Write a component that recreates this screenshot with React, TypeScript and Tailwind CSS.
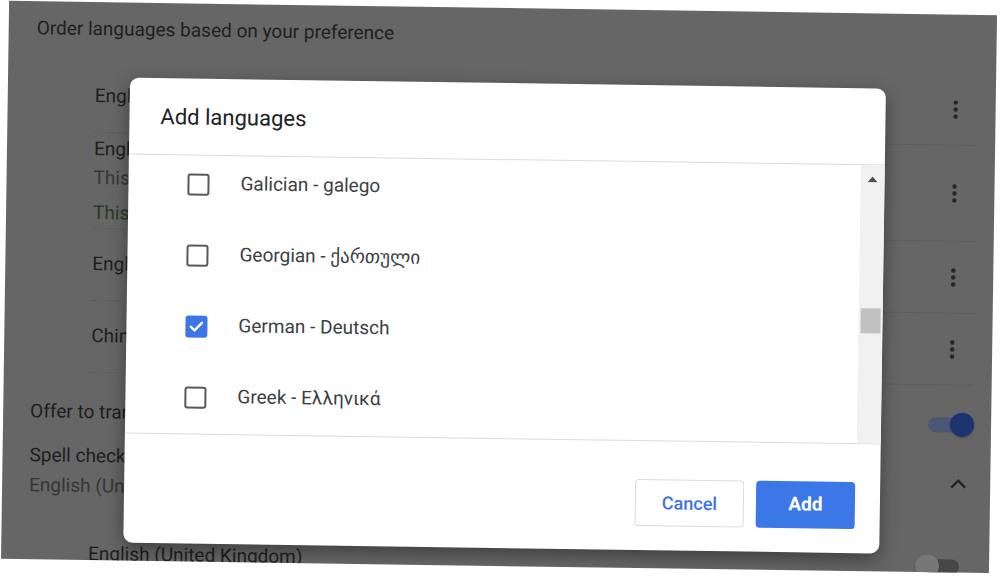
import React from "react";

const Kebab = () => (
  <svg width="6" height="20" viewBox="0 0 6 20" className="block">
    <circle cx="3" cy="3" r="2.2" fill="#262626" />
    <circle cx="3" cy="10" r="2.2" fill="#262626" />
    <circle cx="3" cy="17" r="2.2" fill="#262626" />
  </svg>
);

const Checkbox = ({ checked }: { checked?: boolean }) =>
  checked ? (
    <div className="w-[22px] h-[22px] rounded-[3px] bg-[#3b77e7] flex items-center justify-center shrink-0">
      <svg width="16" height="16" viewBox="0 0 16 16">
        <path d="M2.5 8.3 L6.2 11.8 L13.5 4.2" fill="none" stroke="white" strokeWidth="2.4" strokeLinecap="round" strokeLinejoin="round" />
      </svg>
    </div>
  ) : (
    <div className="w-[22px] h-[22px] rounded-[3px] border-[2.5px] border-[#55595d] shrink-0" />
  );

const langs = [
  { label: "Galician - galego" },
  { label: "Georgian - ქართული" },
  { label: "German - Deutsch", checked: true },
  { label: "Greek - Ελληνικά" },
];

export default function App() {
  return (
    <div className="w-[1000px] h-[579px] overflow-hidden bg-white font-['Roboto','DejaVu_Sans',sans-serif]">
      <div className="w-full h-full rotate-[0.83deg] pt-[8px] pl-[5px]">
        <div className="relative w-[988px] h-[558px] bg-[#666666] overflow-hidden">
          {/* dimmed settings page */}
          <div className="pl-[28px] pt-[15px] text-[19px] leading-[24px] text-[#202020]">
            Order languages based on your preference
          </div>
          <div className="ml-[86px] mr-[18px] mt-[20px] text-[19px] text-[#1e1e1e]">
            <div className="h-[72px] border-b border-[#5e5e5e] flex items-center justify-between">
              <span className="pl-[1px]">English (United States)</span>
              <div className="w-[40px] pr-[5px] flex justify-center"><Kebab /></div>
            </div>
            <div className="h-[96px] border-b border-[#5e5e5e] flex items-center justify-between">
              <div className="pl-[1px] flex flex-col self-start pt-[4px]">
                <span className="leading-[24px]">English</span>
                <span className="leading-[24px] mt-[5px] text-[#363636]">This language is used to display the Google Chrome UI</span>
                <span className="leading-[24px] mt-[11px] text-[#2a3b24]">This language is used to spell check</span>
              </div>
              <div className="w-[40px] pr-[5px] flex justify-center"><Kebab /></div>
            </div>
            <div className="h-[72px] border-b border-[#5e5e5e] flex items-center justify-between">
              <span className="pl-[1px]">English (United Kingdom)</span>
              <div className="w-[40px] pr-[5px] flex justify-center"><Kebab /></div>
            </div>
            <div className="h-[72px] border-b border-[#5e5e5e] flex items-center justify-between">
              <span className="pl-[1px]">Chinese</span>
              <div className="w-[40px] pr-[5px] flex justify-center"><Kebab /></div>
            </div>
          </div>
          <div className="mt-[15px] h-[48px] pl-[27px] pr-[17px] flex items-center justify-between text-[19px] text-[#1e1e1e]">
            <span>Offer to translate pages that aren't in a language you read</span>
            <div className="relative w-[46px] h-[24px] flex items-center">
              <div className="w-[34px] h-[15px] rounded-full bg-[#4b5774]" />
              <div className="absolute right-0 top-0 w-[24px] h-[24px] rounded-full bg-[#1d3470] shadow-[0_1px_2px_rgba(0,0,0,0.3)]" />
            </div>
          </div>
          <div className="mt-[8px] pl-[27px] pr-[23px] flex items-center justify-between text-[19px] text-[#1e1e1e]">
            <div className="flex flex-col">
              <span className="leading-[24px]">Spell check</span>
              <span className="leading-[24px] mt-[6px] text-[#363636]">English (United States)</span>
            </div>
            <svg width="18" height="12" viewBox="0 0 18 12">
              <path d="M2 10 L9 3 L16 10" fill="none" stroke="#232323" strokeWidth="2.4" />
            </svg>
          </div>
          <div className="mt-[32px] h-[48px] pl-[87px] pr-[28px] flex items-center justify-between text-[19px] text-[#1e1e1e]">
            <span>English (United Kingdom)</span>
            <div className="relative w-[46px] h-[24px] flex items-center">
              <div className="ml-[10px] w-[34px] h-[15px] rounded-full bg-[#474747]" />
              <div className="absolute left-0 top-0 w-[24px] h-[24px] rounded-full bg-[#777777] shadow-[0_1px_2px_rgba(0,0,0,0.3)]" />
            </div>
          </div>

          {/* modal dialog */}
          <div className="absolute left-[122px] top-[75px] w-[756px] h-[465px] bg-white rounded-[9px] shadow-[0_6px_18px_rgba(0,0,0,0.4)] flex flex-col overflow-hidden">
            <div className="h-[77px] shrink-0 flex items-center pl-[31px] border-b border-[#dadce0] text-[22px] text-[#202124]">
              Add languages
            </div>
            <div className="h-[279px] shrink-0 flex border-b border-[#dadce0]">
              <div className="flex-1 overflow-hidden">
                <div className="-mt-[7px]">
                  {langs.map((l) => (
                    <div key={l.label} className="h-[71px] flex items-center pl-[59px]">
                      <Checkbox checked={l.checked} />
                      <span className="ml-[31px] text-[19px] text-[#3c4043]">{l.label}</span>
                    </div>
                  ))}
                </div>
              </div>
              <div className="w-[24px] shrink-0 bg-[#f1f1f1] flex flex-col items-center">
                <div className="h-[28px] flex items-center justify-center">
                  <svg width="10" height="6" viewBox="0 0 10 6">
                    <path d="M0 6 L5 0 L10 6 Z" fill="#505050" />
                  </svg>
                </div>
                <div className="mt-[115px] w-[20px] h-[25px] bg-[#c1c1c1]" />
              </div>
            </div>
            <div className="flex-1 flex justify-end items-start pt-[38px] pr-[25px] gap-[12px]">
              <button className="w-[109px] h-[47px] rounded-[4px] border border-[#dadce0] bg-white text-[18px] font-medium text-[#3b74e0]">
                Cancel
              </button>
              <button className="w-[99px] h-[47px] rounded-[4px] bg-[#3b77e7] text-[19px] font-bold text-white">
                Add
              </button>
            </div>
          </div>
        </div>
      </div>
    </div>
  );
}
